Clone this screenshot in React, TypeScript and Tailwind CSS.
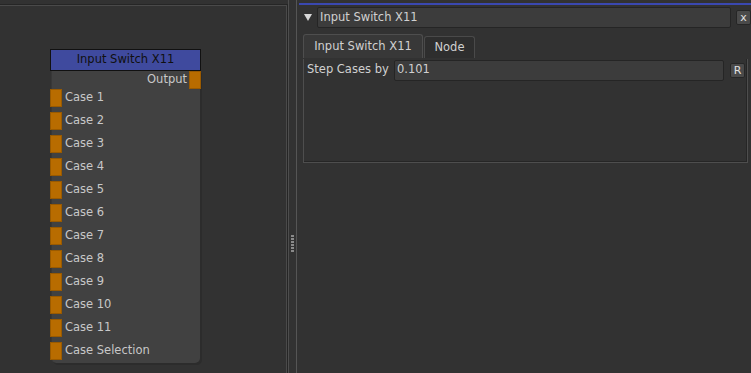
import React from "react";

const cases = ["Case 1", "Case 2", "Case 3", "Case 4", "Case 5", "Case 6", "Case 7", "Case 8", "Case 9", "Case 10", "Case 11", "Case Selection"];

function Port({ className = "" }: { className?: string }) {
  return <div className={`w-[12px] h-[18px] bg-[#b86c00] border border-[#9a5a00] ${className}`} />;
}

function GraphNode() {
  return (
    <div className="absolute left-[50px] top-[44px] w-[151px]">
      {/* title bar */}
      <div className="h-[22px] bg-[#3f4a9e] border border-[#111] flex items-center justify-center text-[#101010]">
        Input Switch X11
      </div>
      {/* body */}
      <div className="ml-[1px] w-[149px] bg-[#414141] rounded-b-[5px] border-l border-[#383838] shadow-[2px_2px_0_#2c2c2c] pb-[3px]">
        <div className="flex justify-end items-center h-[17px]">
          <span className="mr-[2px] text-[#c8c8c8]">Output</span>
          <Port className="-mr-[1px]" />
        </div>
        <div className="flex flex-col gap-[5px] mt-[1px]">
          {cases.map((c) => (
            <div key={c} className="flex items-center h-[18px] -ml-[2px]">
              <Port />
              <span className="ml-[3px] text-[#c8c8c8]">{c}</span>
            </div>
          ))}
        </div>
      </div>
    </div>
  );
}

export default function App() {
  return (
    <div
      className="w-[751px] h-[373px] bg-[#323232] flex overflow-hidden text-[11.5px] text-[#cacaca]"
      style={{ fontFamily: "Tahoma, 'DejaVu Sans', sans-serif" }}
    >
      {/* node graph pane */}
      <div className="w-[288px] h-full pt-[4px]">
        <div className="relative h-full border-t border-r border-[#262626]">
          <div className="absolute inset-0 border-t border-r border-[#4a4a4a]" />
          <GraphNode />
        </div>
      </div>

      {/* splitter */}
      <div className="w-[9px] h-full flex">
        <div className="w-[1px] bg-[#4e4e4e]" />
        <div className="flex-1 flex flex-col items-center pt-[235px] gap-[1px]">
          {[0, 1, 2, 3, 4, 5].map((i) => (
            <div key={i} className="w-[3px] h-[2px] bg-[#8a8a8a]" />
          ))}
        </div>
        <div className="w-[1px] bg-[#555]" />
      </div>

      {/* properties pane */}
      <div className="flex-1 h-full pt-[3px] pl-[2px]">
        <div className="h-[2px] bg-[#3a48b0]" />
        <div className="flex items-center h-[21px] mt-[2px] pl-[5px]">
          <svg width="8" height="7" viewBox="0 0 8 7" className="mr-[5px]">
            <path d="M0 0 H8 L4 7 Z" fill="#d8d8d8" />
          </svg>
          <div className="w-[414px] h-[21px] bg-[#3c3c3c] border border-[#252525] rounded-[2px] flex items-center pl-[2px] text-[#d0d0d0]">
            Input Switch X11
          </div>
          <div className="ml-[5px] w-[15px] h-[15px] bg-[#4a4a4a] border border-[#262626] rounded-[2px] flex items-center justify-center text-[11px] leading-none text-[#e0e0e0]">
            x
          </div>
        </div>

        {/* tabs */}
        <div className="flex items-end mt-[6px] pl-[4px] h-[24px]">
          <div className="h-[24px] w-[120px] bg-[#383838] border border-b-0 border-[#4e4e4e] rounded-t-[3px] flex items-center justify-center text-[#d0d0d0]">
            Input Switch X11
          </div>
          <div className="h-[22px] w-[51px] ml-[1px] bg-[#2e2e2e] border border-b-0 border-[#4a4a4a] rounded-t-[3px] flex items-center justify-center text-[#d0d0d0]">
            Node
          </div>
        </div>

        {/* tab body */}
        <div className="ml-[4px] w-[445px] h-[104px] bg-[#323232] border border-[#4e4e4e] border-t-0 shadow-[inset_-1px_-1px_0_#262626]">
          <div className="flex items-center h-[22px] mt-[1px] pl-[3px]">
            <span className="w-[87px] text-[#d0d0d0]">Step Cases by</span>
            <div className="w-[330px] h-[21px] bg-[#3c3c3c] border border-[#252525] rounded-[2px] flex items-center pl-[2px] text-[#d0d0d0]">
              0.101
            </div>
            <div className="ml-[6px] w-[15px] h-[15px] bg-[#4a4a4a] border border-[#262626] rounded-[2px] flex items-center justify-center text-[11px] leading-none text-[#e0e0e0]">
              R
            </div>
          </div>
        </div>
      </div>
    </div>
  );
}
